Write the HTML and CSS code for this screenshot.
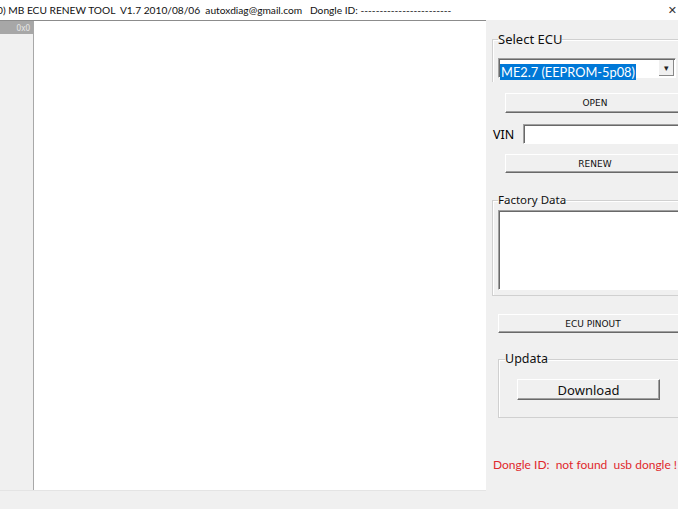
FILE: index.html
```html
<!DOCTYPE html>
<html lang="en">
<head>
  <meta charset="UTF-8">
  <meta name="viewport" content="width=device-width, initial-scale=1.0">
  <title>MB ECU RENEW TOOL</title>
  <link rel="stylesheet" href="styles.css">
</head>
<body>

  <div class="window">
    <div class="titlebar">
      <span class="title">0) MB ECU RENEW TOOL&nbsp; V1.7 2010/08/06&nbsp; autoxdiag@gmail.com&nbsp;&nbsp; Dongle ID: ------------------------</span>
      <span class="close">&#x2715;</span>
    </div>

    <div class="main">
      <!-- hex grid -->
      <div class="grid">
        <div class="row-head">
          <div class="corner">0x0</div>
        </div>
        <div class="cells"></div>
      </div>

      <!-- right control panel -->
      <div class="side">
        <fieldset class="group group-ecu">
          <legend>Select ECU</legend>
          <div class="combo">
            <span class="combo-text"><span class="sel">ME2.7 (EEPROM-5p08)</span></span>
            <span class="combo-btn">&#9662;</span>
          </div>
        </fieldset>

        <button class="btn btn-open">OPEN</button>

        <div class="vin-row">
          <label for="vin">VIN</label>
          <input type="text" id="vin">
        </div>

        <button class="btn btn-renew">RENEW</button>

        <fieldset class="group group-factory">
          <legend>Factory Data</legend>
          <textarea class="factory"></textarea>
        </fieldset>

        <button class="btn btn-pinout">ECU PINOUT</button>

        <fieldset class="group group-upd">
          <legend>Updata</legend>
          <button class="btn btn-download">Download</button>
        </fieldset>

        <p class="dongle">Dongle ID:&nbsp; not found&nbsp; usb dongle !</p>
      </div>
    </div>
  </div>

</body>
</html>
```

FILE: styles.css
```css
body {
  margin: 0;
  font-family: "Noto Sans", "Open Sans", sans-serif;
  background-color: #f0f0f0;
  overflow: hidden;
}
.window {
  width: 678px;
  height: 509px;
  overflow: hidden;
}
.titlebar {
  height: 20px;
  background-color: #fff;
  display: flex;
  align-items: center;
  justify-content: space-between;
  font-family: Lato, "Noto Sans", sans-serif;
  font-size: 10.2px;
  color: #111;
  white-space: nowrap;
  overflow: hidden;
}
.title {
  margin-left: -3px;
}
.close {
  font-family: "DejaVu Sans", sans-serif;
  font-size: 11px;
  color: #333;
  margin-right: 1px;
}
.main {
  display: flex;
  height: 471px;
}
.grid {
  width: 486px;
  flex: none;
  display: flex;
  border-top: 1px solid #8c8c8c;
  border-bottom: 1px solid #e4e4e4;
  box-sizing: border-box;
}
.row-head {
  width: 33px;
  border-right: 1px solid #a8a8a8;
  background-color: #f0f0f0;
}
.corner {
  height: 13px;
  background-color: #a7a7a7;
  color: #e8e8e8;
  font-size: 8px;
  text-align: right;
  padding-right: 3px;
  line-height: 13px;
}
.cells {
  flex: 1;
  background-color: #fff;
}
.side {
  width: 192px;
  flex: none;
  padding-left: 6px;
  box-sizing: border-box;
  overflow: hidden;
}
.group {
  border: 1px solid #d0d0d0;
  box-shadow: inset 1px 1px 0 #fff;
  margin: 0;
  padding: 0;
  width: 200px;
  box-sizing: border-box;
}
.group legend {
  padding: 0;
  margin-left: 0;
  color: #111;
}
.group-ecu {
  margin-top: 11px;
  padding: 11px 0 4px 5px;
  border-bottom: none;
}
.group-ecu legend {
  font-size: 13px;
  line-height: 16px;
}
.combo {
  display: flex;
  height: 20px;
  width: 178px;
  background-color: #fff;
  border: 1px solid;
  border-color: #a0a0a0 #fff #fff #a0a0a0;
  box-shadow: inset 1px 1px 0 #696969;
  box-sizing: border-box;
}
.combo-text {
  flex: 1;
  padding: 1px 0 0 1px;
  white-space: nowrap;
}
.sel {
  background-color: #0078d7;
  color: #fff;
  font-family: Lato, "Noto Sans", sans-serif;
  font-size: 12.8px;
  line-height: 16px;
  display: inline-block;
  padding: 0 1px;
}
.combo-btn {
  width: 14px;
  flex: none;
  margin: 1px 1px 1px 0;
  background-color: #f0f0f0;
  border-right: 1px solid #888;
  border-bottom: 1px solid #888;
  font-size: 9px;
  line-height: 16px;
  text-align: center;
  color: #222;
}
.btn {
  display: block;
  font-family: "DejaVu Sans", sans-serif;
  font-size: 9px;
  color: #111;
  background-color: #f0f0f0;
  border: 1px solid;
  border-color: #fff #696969 #696969 #fff;
  box-shadow: inset -1px -1px 0 #a0a0a0;
  padding: 0;
  height: 20px;
}
.btn-open {
  margin: 11px 0 0 13px;
  width: 180px;
}
.vin-row {
  display: flex;
  align-items: center;
  margin-top: 11px;
  height: 20px;
}
.vin-row label {
  flex: none;
  font-size: 12.5px;
  width: 30px;
  margin-left: 1px;
}
.vin-row input {
  flex: none;
  width: 160px;
  height: 20px;
  box-sizing: border-box;
  border: 1px solid;
  border-color: #a0a0a0 #fff #fff #a0a0a0;
  box-shadow: inset 1px 1px 0 #696969;
  background-color: #fff;
  margin: 0;
}
.btn-renew {
  margin: 10px 0 0 13px;
  width: 180px;
  height: 19px;
}
.group-factory {
  margin-top: 19px;
  padding: 2px 0 5px 5px;
}
.group-factory legend {
  font-size: 11.5px;
  line-height: 16px;
}
.factory {
  display: block;
  width: 190px;
  height: 80px;
  box-sizing: border-box;
  border: 1px solid;
  border-color: #a0a0a0 #fff #fff #a0a0a0;
  box-shadow: inset 1px 1px 0 #696969;
  resize: none;
  margin: 0;
}
.btn-pinout {
  margin: 18px 0 0 6px;
  width: 190px;
  height: 19px;
}
.group-upd {
  margin: 18px 0 0 6px;
  padding: 12px 0 17px 0;
  width: 190px;
}
.group-upd legend {
  font-size: 12.5px;
  line-height: 16px;
  margin-left: 6px;
}
.btn-download {
  font-family: "Noto Sans", sans-serif;
  font-size: 13px;
  width: 143px;
  height: 21px;
  margin-left: 18px;
}
.dongle {
  margin: 39px 0 0 1px;
  font-family: Lato, "Noto Sans", sans-serif;
  font-size: 12px;
  color: #e0282d;
  white-space: nowrap;
}
```
